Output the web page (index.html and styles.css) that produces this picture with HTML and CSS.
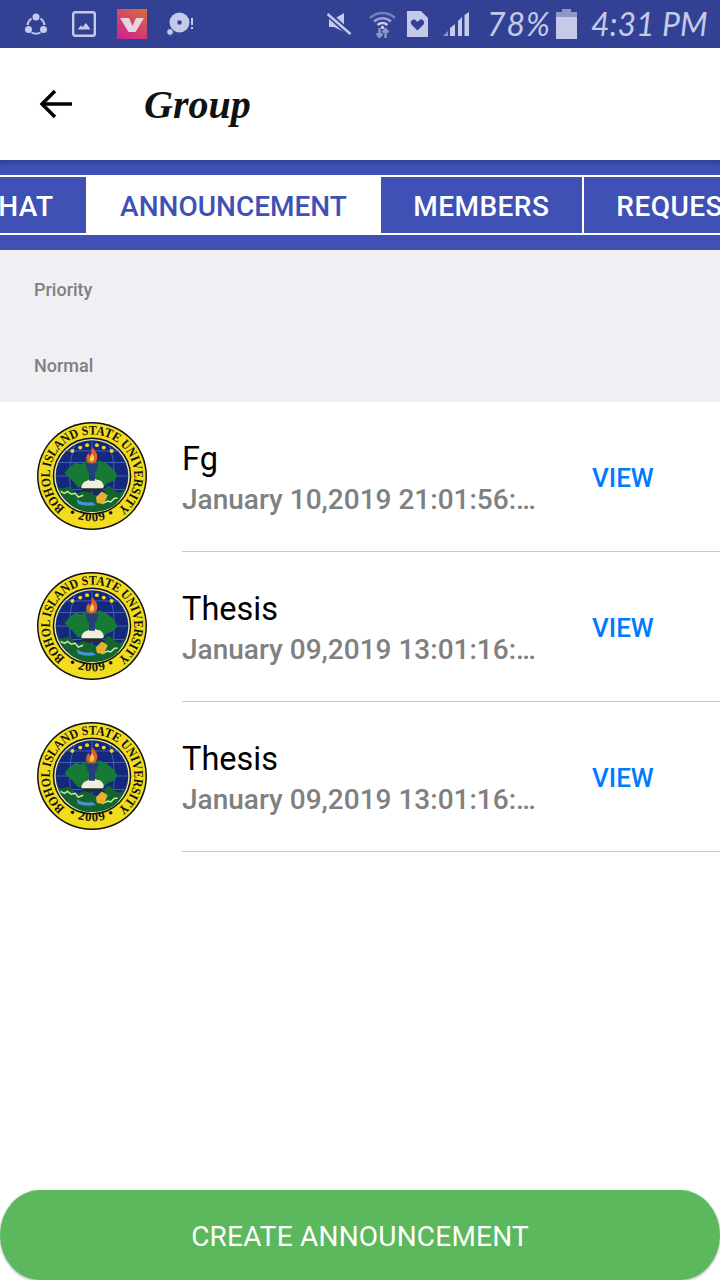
FILE: index.html
```html
<!DOCTYPE html>
<html lang="en">
<head>
<meta charset="utf-8">
<title>Group</title>
<link rel="stylesheet" href="styles.css">
</head>
<body>
<svg class="defs" width="0" height="0" aria-hidden="true">
  <defs>
    <symbol id="seal" viewBox="0 0 112 112" preserveAspectRatio="none">
      <circle cx="56" cy="56" r="56" fill="#111"/>
      <circle cx="56" cy="56" r="54.500" fill="#f2dc1e"/>
      <circle cx="56" cy="56" r="40" fill="#111"/>
      <circle cx="56" cy="56" r="38.500" fill="#e9e9a0"/>
      <circle cx="56" cy="56" r="37" fill="#14287c"/>
      <path d="M20 56h72M22 42h68M27 30h58M22 70h68M56 19v74M38 24q-10 32 0 64M74 24q10 32 0 64" fill="none" stroke="#4f6fc4" stroke-width=".8"/>
      <path d="M31 49l8-7 6 2 5-4 5 3 9-3 7 3 7 6 4 7-4 5-7 3-6 6-8-1-6-4-9 3-5-6-6-6-3-3z" fill="#177a34"/>
      <path d="M45 68q1-6 6-7 5-4 10-1 6 0 7 7l-1 2H46z" fill="#f1efdc"/>
      <path d="M45 69h23l-2 3H47z" fill="#2a2a2a"/>
      <path d="M21 68q4 2 8 0t8 3 7 2 13 2 12-4 9-1 12-3q-3 14-13 21-12 7-28 5-13-3-20-13-6-6-8-12z" fill="#14652c"/>
      <path d="M24 72l4 2 3-2 4 3 4-1 3 4 5-2M66 85l6-3 3 1 4-4 3 0" fill="none" stroke="#cfe8a8" stroke-width="1.500"/>
      <path d="M40 80q8 5 16 3l4 3q-10 2-18-1z" fill="#4a93d8"/>
      <path d="M60 78l6-6 6 4-4 9-7-1z" fill="#e6b12d"/>
      <path d="M49 43h14l-3 9h-8zM53 52h6v9h-6z" fill="#24407c"/>
      <path d="M56 26q7 7 5 13-1 4-5 4-6 0-6-6 1-4 3-5 0 3 1 3 2-4 2-9z" fill="#e2602a"/>
      <path d="M56 33q3 3 2 6-1 2-2 2-3 0-2-4z" fill="#f3d25a"/>
      <g fill="#f2dc1e"><circle cx="36" cy="30" r="2"/><circle cx="44" cy="26.500" r="2"/><circle cx="51" cy="24" r="2"/><circle cx="61" cy="24" r="2"/><circle cx="68" cy="26.500" r="2"/><circle cx="76" cy="30" r="2"/></g>
      <path id="sealArc" d="M28.700 89.200A43 43 0 1 1 83.300 89.200" fill="none"/>
      <path id="sealBottom" d="M28.400 94A47 47 0 0 0 83.600 94" fill="none"/>
      <text class="seal-text"><textPath href="#sealArc" textLength="212" lengthAdjust="spacingAndGlyphs">BOHOL ISLAND STATE UNIVERSITY</textPath></text>
      <text class="seal-text seal-year"><textPath href="#sealBottom" startOffset="50%">• 2009 •</textPath></text>
    </symbol>
  </defs>
</svg>

<div class="phone">
  <div class="status">
    <svg class="ico" width="27" height="24" viewBox="0 0 27 24"><g fill="#c5cae9"><circle cx="11" cy="5" r="3.500"/><circle cx="3.500" cy="17.500" r="3.500"/><circle cx="18.500" cy="17.500" r="3.500"/></g><g fill="none" stroke="#c5cae9" stroke-width="2"><path d="M6.500 6.500A10 10 0 0 0 2.500 13"/><path d="M15.500 6.500A10 10 0 0 1 19.500 13"/><path d="M6.500 20.500a9 9 0 0 0 9 0"/></g></svg>
    <svg class="ico ml-20" width="25" height="26" viewBox="0 0 25 26"><rect x="1.200" y="1.200" width="21.600" height="23.600" rx="2" fill="none" stroke="#c5cae9" stroke-width="2.400"/><path d="M5.500 18.500l3.500-4 2 1.500 2.500-4 2 2 3 4.500z" fill="#c5cae9"/></svg>
    <svg class="ico ml-20" width="30" height="30" viewBox="0 0 30 30"><defs><linearGradient id="vg" x1="0.800" y1="0" x2="0.200" y2="1"><stop offset="0" stop-color="#d9673f"/><stop offset="1" stop-color="#cf2490"/></linearGradient></defs><rect width="30" height="30" fill="url(#vg)"/><path d="M3 9h9l3.500 8 3.500-8h8l-8.500 14h-7z" fill="#e6d5dd"/></svg>
    <svg class="ico ml-20" width="26" height="24" viewBox="0 0 26 24"><circle cx="12.500" cy="10.500" r="10" fill="#c5cae9"/><circle cx="12.500" cy="10.500" r="2.200" fill="#334194"/><circle cx="3" cy="20" r="3.400" fill="#c5cae9" stroke="#334194"/><rect x="24" y="6" width="2" height="7" fill="#c5cae9"/><rect x="24" y="15" width="2" height="2" fill="#c5cae9"/></svg>

    <svg class="ico ml-auto" width="24" height="22" viewBox="0 0 24 22"><path d="M2 6h5l10-6v19L7 14H2z" fill="#c5cae9"/><path d="M0 0l23 21" stroke="#334194" stroke-width="6"/><path d="M0.500 1l23 20" stroke="#c5cae9" stroke-width="2.500"/></svg>
    <svg class="ico ml-18" width="27" height="28" viewBox="0 0 27 28"><g fill="none" stroke="#c5cae9"><path d="M1 8a18 18 0 0 1 25 0" stroke-width="2.500" opacity=".45"/><path d="M5 11.500a12.500 12.500 0 0 1 17 0" stroke-width="2.500" opacity=".7"/><path d="M8.500 15a7.500 7.500 0 0 1 10 0" stroke-width="2.500"/></g><circle cx="13.500" cy="17.500" r="1.800" fill="#c5cae9"/><path d="M10.500 18v9M7.500 23.500l3 3.500 3-3.500M16.500 28v-9M13.500 22.500l3-3.500 3 3.500" fill="none" stroke="#8f97c8" stroke-width="2.400"/></svg>
    <svg class="ico ml-11" width="21" height="26" viewBox="0 0 21 26"><path d="M0 0h14l7 7v19H0z" fill="#c5cae9"/><path d="M10.500 19.500l-6-6c-2-3 1-6 4-4.500l2 2 2-2c3-1.500 6 1.500 4 4.500z" fill="#334194"/></svg>
    <svg class="ico ml-15" width="26" height="24" viewBox="0 0 26 24"><path d="M0 24l5-5v5z" fill="#8f97c8"/><path d="M7 24v-8l5-4v12z" fill="#c5cae9"/><path d="M15 24V9l4-4v19zM21.500 24V3L26 0v24z" fill="#c5cae9"/></svg>
    <span class="hand pct ml-18">78%</span>
    <svg class="ico ml-6" width="21" height="30" viewBox="0 0 21 30"><path d="M6 0h9v3h6v5H0V3h6z" fill="#8f97c8"/><rect y="8" width="21" height="22" fill="#c5cae9"/></svg>
    <span class="hand clock ml-14">4:31 PM</span>
  </div>

  <header class="appbar">
    <svg class="back" width="34" height="30" viewBox="0 0 34 30"><path d="M33 15H3M16 2L3 15l13 13" fill="none" stroke="#000" stroke-width="3.500"/></svg>
    <h1 class="title">Group</h1>
  </header>

  <nav class="tabbar">
    <div class="tabs">
      <div class="tab">CHAT</div>
      <div class="tab tab-active">ANNOUNCEMENT</div>
      <div class="tab">MEMBERS</div>
      <div class="tab">REQUESTS</div>
    </div>
  </nav>

  <section class="filters">
    <div class="filter">Priority</div>
    <div class="filter">Normal</div>
  </section>

  <main class="list">
    <div class="row">
      <svg class="seal" width="110" height="108"><use href="#seal" width="110" height="108"/></svg>
      <div class="row-body">
        <div class="row-text">
          <div class="row-title">Fg</div>
          <div class="row-date">January 10,2019 21:01:56:…</div>
        </div>
        <div class="row-action">VIEW</div>
      </div>
    </div>
    <div class="row">
      <svg class="seal" width="110" height="108"><use href="#seal" width="110" height="108"/></svg>
      <div class="row-body">
        <div class="row-text">
          <div class="row-title">Thesis</div>
          <div class="row-date">January 09,2019 13:01:16:…</div>
        </div>
        <div class="row-action">VIEW</div>
      </div>
    </div>
    <div class="row">
      <svg class="seal" width="110" height="108"><use href="#seal" width="110" height="108"/></svg>
      <div class="row-body">
        <div class="row-text">
          <div class="row-title">Thesis</div>
          <div class="row-date">January 09,2019 13:01:16:…</div>
        </div>
        <div class="row-action">VIEW</div>
      </div>
    </div>
  </main>

  <button class="create">CREATE ANNOUNCEMENT</button>
</div>
</body>
</html>
```

FILE: styles.css
```css
* { box-sizing: border-box; }
html, body { margin: 0; padding: 0; background: #fff; }
body { font-family: Roboto, "Liberation Sans", sans-serif; }
.defs { position: absolute; }
.phone { width: 720px; height: 1280px; display: flex; flex-direction: column; overflow: hidden; }

.status { height: 48px; flex: none; background: #334194; display: flex; align-items: center; padding: 0 17px 0 25px; }
.ico { display: block; flex: none; }
.ml-6 { margin-left: 6px; }
.ml-11 { margin-left: 11px; }
.ml-14 { margin-left: 14px; }
.ml-15 { margin-left: 15px; }
.ml-18 { margin-left: 18px; }
.ml-20 { margin-left: 20px; }
.ml-auto { margin-left: auto; }
.hand { font-family: Lato, sans-serif; font-style: italic; font-weight: 400; color: #c5cae9; line-height: 48px; white-space: nowrap; flex: none; }
.pct { font-size: 32px; width: 63px; letter-spacing: 1px; }
.clock { font-size: 32px; width: 112px; }

.appbar { height: 112px; flex: none; display: flex; align-items: center; padding-left: 39px; background: #fff; }
.back { display: block; }
.title { margin: 0 0 0 71px; font-family: "Liberation Serif", serif; font-style: italic; font-weight: 700; font-size: 40px; color: #111; }

.tabbar { height: 90px; flex: none; padding: 15px 0; background: #3f51b5; box-shadow: inset 0 6px 5px -3px #334194; overflow: hidden; }
.tabs { display: flex; height: 60px; margin-left: -53px; width: max-content; background: #fff; padding: 2px 0; gap: 2px; }
.tab { padding: 3px 32.500px 0; display: flex; align-items: center; font-size: 28px; font-weight: 500; letter-spacing: .45px; line-height: 53px; color: #fff; background: #3f51b5; }
.tab-active { padding: 3px 34px 0; margin: 0 -2px; letter-spacing: 0; color: #3f51b5; background: #fff; }

.filters { height: 152px; flex: none; background: #efeff4; display: flex; flex-direction: column; padding-top: 1px; }
.filter { height: 76.500px; flex: none; padding-left: 34px; display: flex; align-items: center; font-size: 18px; font-weight: 500; color: #808080; }

.list { flex: 1; }
.row { height: 150px; display: flex; align-items: stretch; padding-left: 37px; }
.seal { flex: none; margin-top: 20px; }
.row-body { flex: 1; margin-left: 35px; display: flex; align-items: center; border-bottom: 1px solid #c8c8c8; }
.row-text { width: 352px; flex: none; margin-top: 6px; }
.row-title { font-size: 32.500px; line-height: 40px; color: #000; }
.row-date { font-size: 28px; line-height: 41px; font-weight: 500; color: #808080; white-space: nowrap; }
.row-action { margin-left: 58px; font-size: 26px; font-weight: 500; color: #007aff; margin-top: 3px; }

.seal-text { font-family: "Liberation Serif", serif; font-weight: 700; font-size: 13.500px; fill: #111; }
.seal-year { text-anchor: middle; font-size: 13px; letter-spacing: 1px; }

.create { height: 90px; flex: none; border: 0; padding: 2px 0 0; width: 720px; background: #5cb85c; border-radius: 40px / 45px; box-shadow: 0 1px 3px rgba(0,0,0,.35); color: #fff; font-family: Roboto, sans-serif; font-size: 28px; letter-spacing: .2px; display: flex; align-items: center; justify-content: center; }
```
